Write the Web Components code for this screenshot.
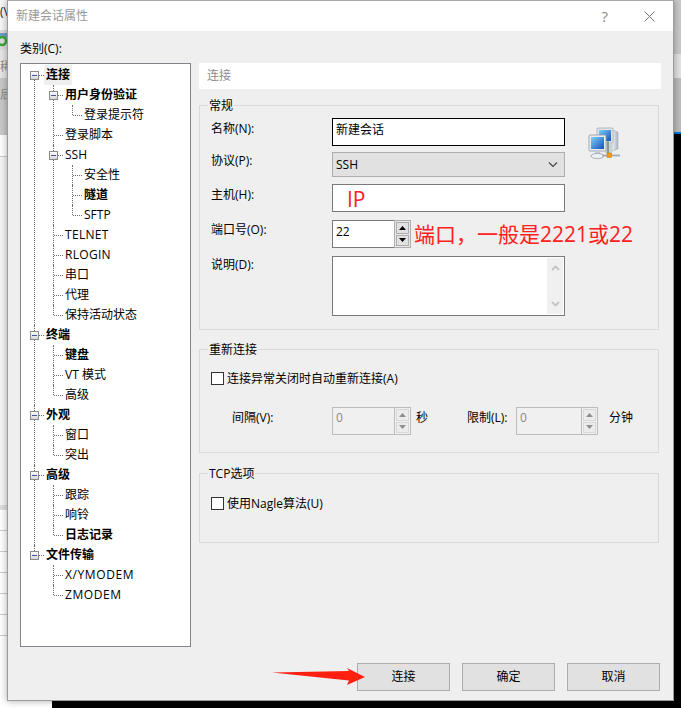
<!DOCTYPE html>
<html>
<head>
<meta charset="utf-8">
<title>新建会话属性</title>
<style>
  html, body { margin: 0; background: #fff; }
  body { font: 12px/20px "Open Sans", "Noto Sans CJK SC", "Liberation Sans", sans-serif; color: #000; }
</style>
</head>
<body>

<desk-top>
  <dialog-window caption="新建会话属性">
    <tree-view slot="tree">
      <tree-node label="连接" bold selected open>
        <tree-node label="用户身份验证" bold open>
          <tree-node label="登录提示符"></tree-node>
        </tree-node>
        <tree-node label="登录脚本"></tree-node>
        <tree-node label="SSH" open>
          <tree-node label="安全性"></tree-node>
          <tree-node label="隧道" bold></tree-node>
          <tree-node label="SFTP"></tree-node>
        </tree-node>
        <tree-node label="TELNET" style="letter-spacing:.3px"></tree-node>
        <tree-node label="RLOGIN" style="letter-spacing:.3px"></tree-node>
        <tree-node label="串口"></tree-node>
        <tree-node label="代理"></tree-node>
        <tree-node label="保持活动状态"></tree-node>
      </tree-node>
      <tree-node label="终端" bold open>
        <tree-node label="键盘" bold></tree-node>
        <tree-node label="VT 模式"></tree-node>
        <tree-node label="高级"></tree-node>
      </tree-node>
      <tree-node label="外观" bold open>
        <tree-node label="窗口"></tree-node>
        <tree-node label="突出"></tree-node>
      </tree-node>
      <tree-node label="高级" bold open>
        <tree-node label="跟踪"></tree-node>
        <tree-node label="响铃"></tree-node>
        <tree-node label="日志记录" bold></tree-node>
      </tree-node>
      <tree-node label="文件传输" bold open>
        <tree-node label="X/YMODEM" style="letter-spacing:.6px"></tree-node>
        <tree-node label="ZMODEM" style="letter-spacing:.6px"></tree-node>
      </tree-node>
    </tree-view>

    <panel-header slot="panel">连接</panel-header>

    <group-box slot="panel" caption="常规" style="height:225px;margin-top:16px;--pad-top:12px">
      <form-row label="名称(N):" label-top="1">
        <text-box focused>新建会话</text-box>
        <net-icon></net-icon>
      </form-row>
      <form-row label="协议(P):" label-top="-1" style="margin-top:6px">
        <combo-box>SSH</combo-box>
      </form-row>
      <form-row label="主机(H):" label-top="1" style="margin-top:7px">
        <text-box style="color:#ff2020;font-size:21px;line-height:28px;padding-left:14px;padding-top:0">IP</text-box>
      </form-row>
      <form-row label="端口号(O):" style="margin-top:8px">
        <spin-box value="22"></spin-box>
        <note-text>端口，一般是2221或22</note-text>
      </form-row>
      <form-row label="说明(D):" label-top="-1" style="margin-top:8px">
        <memo-box></memo-box>
      </form-row>
    </group-box>

    <group-box slot="panel" caption="重新连接" style="height:104px;margin-top:19px;--pad-top:22px">
      <check-box>连接异常关闭时自动重新连接(A)</check-box>
      <form-row label="间隔(V):" label-top="1" indent="21" style="margin-top:22px">
        <spin-box value="0" disabled></spin-box>
        <text-label style="margin-left:5px;width:51px">秒</text-label>
        <text-label style="width:49px">限制(L):</text-label>
        <spin-box value="0" disabled style="width:82px"></spin-box>
        <text-label style="margin-left:11px">分钟</text-label>
      </form-row>
    </group-box>

    <group-box slot="panel" caption="TCP选项" style="height:70px;margin-top:20px;--pad-top:23px">
      <check-box>使用Nagle算法(U)</check-box>
    </group-box>

    <push-button slot="buttons">连接</push-button>
    <push-button slot="buttons">确定</push-button>
    <push-button slot="buttons">取消</push-button>
  </dialog-window>
  <red-arrow></red-arrow>
</desk-top>

<script>
// page behind the dialog, only a few pixels of it are visible
class DeskTop extends HTMLElement {
  constructor() {
    super();
    this.attachShadow({ mode: 'open' });
    this.shadowRoot.innerHTML = `
      <style>
        :host {
          display: block; position: relative; width: 681px; height: 708px; overflow: hidden;
          box-sizing: border-box; padding-left: 7px;
          background:
            linear-gradient(#000, #000) 52px 701px / 629px 7px no-repeat,
            linear-gradient(#c9c9c9 0 54px, #e2e2e2 54px 78px, #bcbcbc 78px 132px, #0078d7 132px 134px, #000 134px) 674px 0 / 7px 100% no-repeat,
            repeating-linear-gradient(#fff 0 20px, #ccc 20px 21px) 0 510px / 7px 126px no-repeat,
            linear-gradient(#f6f6f6 0 30px, #dcdcdc 30px 50px, #e6e6e6 50px 78px, #c8c8c8 78px 135px, #fff 135px 156px, #ccc 156px 157px, #f4f4f4 157px 505px, #ddd 505px 510px, #fff 510px) 0 0 / 7px 100% no-repeat;
        }
        .bit { position: absolute; left: 0; line-height: 14px; color: #8a8a8a; }
        svg { position: absolute; left: -3px; top: 33px; }
      </style>
      <span class="bit" style="top:5px;color:#223">(V</span>
      <svg width="11" height="14" viewBox="0 0 11 14">
        <rect x="0" y="0" width="11" height="5" fill="#6f9cc9"/>
        <circle cx="5" cy="8" r="4" fill="none" stroke="#3aa63a" stroke-width="2.5"/>
      </svg>
      <span class="bit" style="top:60px">稀</span>
      <span class="bit" style="top:88px">后</span>
      <slot></slot>`;
  }
}

class DialogWindow extends HTMLElement {
  constructor() {
    super();
    this.attachShadow({ mode: 'open' });
  }
  connectedCallback() {
    this.shadowRoot.innerHTML = `
      <style>
        :host {
          display: flex; flex-direction: column; position: relative; box-sizing: border-box;
          width: 667px; height: 701px; background: #efefef;
          border: 1px solid #9c9c9c; border-top-color: #a8a8a8;
          box-shadow: 0 0 7px rgba(0,0,0,.35);
        }
        .title {
          display: flex; align-items: center; height: 30px; flex: none; background: #fff;
          padding-left: 8px; color: #999;
        }
        .title span { flex: 1; }
        .title svg { display: block; margin-right: 18px; }
        .help { flex: none !important; margin-right: 36px; font-size: 15px; color: #8c8c8c; }
        .main { display: flex; flex: none; height: 616px; padding-left: 12px; }
        .left { width: 171px; display: flex; flex-direction: column; }
        .left .cap { height: 32px; line-height: 36px; flex: none; }
        .right { margin-left: 8px; width: 462px; padding-top: 32px; }
        .buttons { display: flex; justify-content: flex-end; gap: 12px; padding: 16px 13px 0 0; }
      </style>
      <div class="title">
        <span>${this.getAttribute('caption')}</span>
        <span class="help">?</span>
        <svg width="11" height="11" viewBox="0 0 11 11"><path d="M.5.5l10 10M10.5.5l-10 10" stroke="#777" fill="none"/></svg>
      </div>
      <div class="main">
        <div class="left">
          <div class="cap">类别(C):</div>
          <slot name="tree"></slot>
        </div>
        <div class="right"><slot name="panel"></slot></div>
      </div>
      <div class="buttons"><slot name="buttons"></slot></div>`;
  }
}

class TreeView extends HTMLElement {
  constructor() {
    super();
    this.attachShadow({ mode: 'open' });
    this.shadowRoot.innerHTML = `
      <style>
        :host {
          display: block; box-sizing: border-box; height: 584px; background: #fff;
          border: 1px solid #82858c; padding: 1px 0 0 13px;
        }
      </style>
      <slot></slot>`;
  }
}

class TreeNode extends HTMLElement {
  constructor() {
    super();
    this.attachShadow({ mode: 'open' });
  }
  connectedCallback() {
    const label = this.getAttribute('label');
    const bold = this.hasAttribute('bold');
    const selected = this.hasAttribute('selected');
    const open = this.hasAttribute('open');
    const isRoot = this.parentElement.localName === 'tree-view';
    const isFirst = !this.previousElementSibling;
    const isLast = !this.nextElementSibling;
    // vertical guide runs the whole node height, last child stops at its own row
    const lineTop = isRoot && isFirst ? 10 : 0;
    this.shadowRoot.innerHTML = `
      <style>
        :host { display: block; position: relative; white-space: nowrap; }
        .v { position: absolute; left: 0; top: ${lineTop}px; ${isLast ? 'height:' + (10 - lineTop) + 'px' : 'bottom:0'}; border-left: 1px dotted #6e6e6e; }
        .h { position: absolute; left: 1px; top: 10px; width: 9px; border-top: 1px dotted #6e6e6e; }
        .row { height: 20px; padding-left: 12px; position: relative; }
        .text { display: inline-block; height: 20px; line-height: 20px; vertical-align: top; font-weight: ${bold ? 700 : 400}; }
        .sel { background: #efefef; padding: 0 2px; margin-left: -2px; }
        .box {
          position: absolute; left: -4px; top: 6px; width: 9px; height: 9px; box-sizing: border-box;
          border: 1px solid #8b8b8b; background: linear-gradient(#fafafa, #d8d8d8);
        }
        .box::after { content: ""; position: absolute; left: 1px; right: 1px; top: 3px; height: 1px; background: #3c5a9a; }
        .kids { padding-left: 19px; }
      </style>
      <div class="v"></div>
      <div class="h"></div>
      <div class="row">
        ${open ? '<div class="box"></div>' : ''}
        <span class="text${selected ? ' sel' : ''}">${label}</span>
      </div>
      <div class="kids"><slot></slot></div>`;
  }
}

class PanelHeader extends HTMLElement {
  constructor() {
    super();
    this.attachShadow({ mode: 'open' });
    this.shadowRoot.innerHTML = `
      <style>
        :host { display: block; height: 26px; line-height: 25px; background: #fff; padding-left: 8px; color: #8a8a8a; }
      </style>
      <slot></slot>`;
  }
}

class GroupBox extends HTMLElement {
  constructor() {
    super();
    this.attachShadow({ mode: 'open' });
  }
  connectedCallback() {
    this.shadowRoot.innerHTML = `
      <style>
        :host {
          display: block; position: relative; box-sizing: border-box; width: 460px;
          border: 1px solid #d9d9d9; padding: var(--pad-top, 12px) 0 0 11px;
        }
        .cap { position: absolute; left: 8px; top: -10px; background: linear-gradient(transparent 8px, #efefef 8px 12px, transparent 12px); padding: 0 1px; line-height: 20px; }
      </style>
      <span class="cap">${this.getAttribute('caption')}</span>
      <slot></slot>`;
  }
}

class FormRow extends HTMLElement {
  constructor() {
    super();
    this.attachShadow({ mode: 'open' });
  }
  connectedCallback() {
    const top = this.getAttribute('label-top') || 0;
    const indent = parseInt(this.getAttribute('indent')) || 0;
    this.shadowRoot.innerHTML = `
      <style>
        :host { display: flex; align-items: flex-start; line-height: 20px; }
        .label { flex: none; box-sizing: border-box; width: 121px; padding-left: ${indent}px; margin-top: ${top}px; }
      </style>
      <span class="label">${this.getAttribute('label')}</span>
      <slot></slot>`;
  }
}

class TextBox extends HTMLElement {
  constructor() {
    super();
    this.attachShadow({ mode: 'open' });
    this.shadowRoot.innerHTML = `
      <style>
        :host {
          display: block; flex: none; box-sizing: border-box; width: 233px; height: 28px;
          background: #fff; border: 1px solid #7a7a7a; padding: 1px 0 0 3px; line-height: 20px;
        }
        :host([focused]) { border-color: #000; }
      </style>
      <slot></slot>`;
  }
}

class ComboBox extends HTMLElement {
  constructor() {
    super();
    this.attachShadow({ mode: 'open' });
    this.shadowRoot.innerHTML = `
      <style>
        :host {
          display: flex; align-items: center; justify-content: space-between; flex: none; box-sizing: border-box;
          width: 233px; height: 25px; background: #e1e1e1; border: 1px solid #adadad; padding: 0 3px;
        }
        svg { margin-right: 3px; }
      </style>
      <slot></slot>
      <svg width="10" height="6" viewBox="0 0 10 6"><path d="M1 .5l4 4 4-4" fill="none" stroke="#444" stroke-width="1.1"/></svg>`;
  }
}

class SpinBox extends HTMLElement {
  constructor() {
    super();
    this.attachShadow({ mode: 'open' });
  }
  connectedCallback() {
    const off = this.hasAttribute('disabled');
    const arrow = off ? '#8f8f8f' : '#000';
    this.shadowRoot.innerHTML = `
      <style>
        :host { display: flex; flex: none; box-sizing: border-box; width: 79px; height: 28px; line-height: 20px; }
        .input {
          flex: 1; box-sizing: border-box; padding: ${off ? 0 : 1}px 0 0 3px;
          background: ${off ? '#f0f0f0' : '#fff'}; color: ${off ? '#8a8a8a' : '#000'};
          border: 1px solid ${off ? '#bcbcbc' : '#7a7a7a'}; border-right: 0;
        }
        .btns {
          flex: none; width: 17px; box-sizing: border-box; display: flex; flex-direction: column; gap: 1px;
          border: 1px solid ${off ? '#bcbcbc' : '#adadad'}; padding: 1px; background: ${off ? '#f0f0f0' : '#e8e8e8'};
        }
        .btn {
          flex: 1; display: flex; align-items: center; justify-content: center;
          background: ${off ? '#ececec' : '#e1e1e1'}; border: 1px solid ${off ? '#d8d8d8' : '#adadad'};
        }
      </style>
      <div class="input">${this.getAttribute('value')}</div>
      <div class="btns">
        <div class="btn"><svg width="7" height="4" viewBox="0 0 7 4"><path d="M3.5 0L7 4H0z" fill="${arrow}"/></svg></div>
        <div class="btn"><svg width="7" height="4" viewBox="0 0 7 4"><path d="M0 0h7L3.5 4z" fill="${arrow}"/></svg></div>
      </div>`;
  }
}

class MemoBox extends HTMLElement {
  constructor() {
    super();
    this.attachShadow({ mode: 'open' });
    this.shadowRoot.innerHTML = `
      <style>
        :host {
          display: flex; justify-content: flex-end; flex: none; box-sizing: border-box;
          width: 233px; height: 60px; background: #fff; border: 1px solid #7a7a7a; padding: 1px;
        }
        .bar {
          width: 16px; background: #f0f0f0; display: flex; flex-direction: column;
          justify-content: space-between; align-items: center; padding: 7px 0;
        }
      </style>
      <div class="bar">
        <svg width="9" height="6" viewBox="0 0 9 6"><path d="M1 5l3.5-3.5L8 5" fill="none" stroke="#c4c4c4" stroke-width="1.8"/></svg>
        <svg width="9" height="6" viewBox="0 0 9 6"><path d="M1 1l3.5 3.5L8 1" fill="none" stroke="#c4c4c4" stroke-width="1.8"/></svg>
      </div>`;
  }
}

class CheckBox extends HTMLElement {
  constructor() {
    super();
    this.attachShadow({ mode: 'open' });
    this.shadowRoot.innerHTML = `
      <style>
        :host { display: flex; align-items: flex-start; height: 13px; line-height: 13px; white-space: nowrap; }
        .mark { flex: none; box-sizing: border-box; width: 13px; height: 13px; background: #fff; border: 1px solid #333; margin-right: 3px; }
      </style>
      <span class="mark"></span><slot></slot>`;
  }
}

class TextLabel extends HTMLElement {
  constructor() {
    super();
    this.attachShadow({ mode: 'open' });
    this.shadowRoot.innerHTML = `
      <style>:host { display: block; flex: none; margin-top: 1px; line-height: 20px; white-space: nowrap; }</style>
      <slot></slot>`;
  }
}

class NoteText extends HTMLElement {
  constructor() {
    super();
    this.attachShadow({ mode: 'open' });
    this.shadowRoot.innerHTML = `
      <style>:host { display: block; flex: none; margin-left: 3px; font-size: 21px; line-height: 28px; color: #ff2020; white-space: nowrap; }</style>
      <slot></slot>`;
  }
}

class NetIcon extends HTMLElement {
  constructor() {
    super();
    this.attachShadow({ mode: 'open' });
    this.shadowRoot.innerHTML = `
      <style>:host { display: block; flex: none; width: 32px; height: 33px; margin: 9px 0 -14px 23px; }</style>
      <svg width="32" height="33" viewBox="0 0 32 33">
        <defs>
          <linearGradient id="s" x1="0" y1="0" x2="1" y2="1">
            <stop offset="0" stop-color="#7fd0f5"/><stop offset="1" stop-color="#1450c0"/>
          </linearGradient>
          <linearGradient id="t" x1="0" y1="0" x2="1" y2="0">
            <stop offset="0" stop-color="#f2f5f8"/><stop offset="1" stop-color="#a9b3bd"/>
          </linearGradient>
        </defs>
        <path d="M24 3l6 2v17l-6 2z" fill="url(#t)" stroke="#a8b0b8" stroke-width=".6"/>
        <rect x="9" y="1" width="16" height="15" rx="1" fill="#dfe5ea" stroke="#99a3ad" stroke-width=".7"/>
        <rect x="11" y="3" width="12" height="11" fill="url(#s)"/>
        <rect x="17" y="16" width="7" height="10" fill="#c9d0d7"/>
        <path d="M20 14v16" stroke="#3f6c5a" stroke-width="1"/>
        <rect x="1" y="8" width="17" height="16" rx="1" fill="#e8ecf0" stroke="#8e99a3" stroke-width=".8"/>
        <rect x="3" y="10" width="13" height="12" fill="url(#s)"/>
        <path d="M7 24h5v3H7z" fill="#c6ced6"/>
        <ellipse cx="9.5" cy="29" rx="6.5" ry="2.6" fill="#eef1f4" stroke="#97a2ac" stroke-width=".8"/>
        <path d="M14 28.5h18" stroke="#a3adb6" stroke-width="1.8"/>
        <rect x="19" y="26" width="4.5" height="4.5" fill="#f39a12" stroke="#c77700" stroke-width=".5"/>
      </svg>`;
  }
}

class PushButton extends HTMLElement {
  constructor() {
    super();
    this.attachShadow({ mode: 'open' });
    this.shadowRoot.innerHTML = `
      <style>
        :host {
          display: flex; align-items: center; justify-content: center; box-sizing: border-box;
          width: 93px; height: 28px; background: #e1e1e1; border: 1px solid #adadad;
        }
      </style>
      <slot></slot>`;
  }
}

// hand drawn arrow that points at the connect button
class RedArrow extends HTMLElement {
  constructor() {
    super();
    this.attachShadow({ mode: 'open' });
    this.shadowRoot.innerHTML = `
      <style>:host { position: absolute; left: 270px; top: 666px; width: 97px; height: 21px; }</style>
      <svg width="97" height="21" viewBox="0 0 97 21">
        <path d="M2 6.5L79 5 77 2 95 11 77 19 79 14.5z" fill="#ff2012"/>
      </svg>`;
  }
}

customElements.define('desk-top', DeskTop);
customElements.define('dialog-window', DialogWindow);
customElements.define('tree-view', TreeView);
customElements.define('tree-node', TreeNode);
customElements.define('panel-header', PanelHeader);
customElements.define('group-box', GroupBox);
customElements.define('form-row', FormRow);
customElements.define('text-box', TextBox);
customElements.define('combo-box', ComboBox);
customElements.define('spin-box', SpinBox);
customElements.define('memo-box', MemoBox);
customElements.define('check-box', CheckBox);
customElements.define('text-label', TextLabel);
customElements.define('note-text', NoteText);
customElements.define('net-icon', NetIcon);
customElements.define('push-button', PushButton);
customElements.define('red-arrow', RedArrow);
</script>
</body>
</html>
